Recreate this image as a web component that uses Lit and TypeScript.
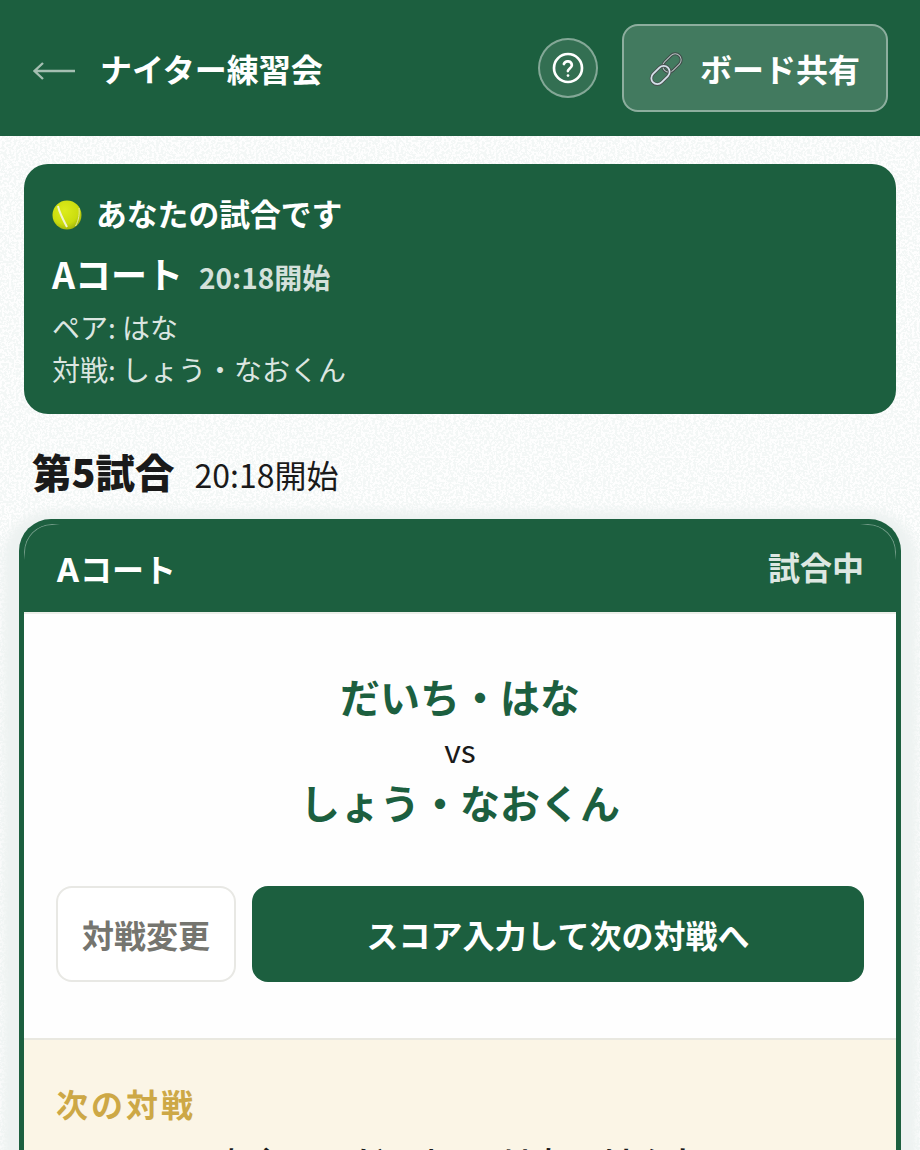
import { LitElement, html, css, unsafeCSS } from "lit";
import { customElement } from "lit/decorators.js";

const paper = `<svg xmlns='http://www.w3.org/2000/svg' width='240' height='240'><filter id='n' x='0' y='0' width='100%' height='100%'><feTurbulence type='fractalNoise' baseFrequency='0.42' numOctaves='2' seed='4' stitchTiles='stitch'/><feColorMatrix values='0 0 0 0 0.9 0 0 0 0 0.93 0 0 0 0 0.92 0 0 0 12 -5.4'/></filter><rect width='240' height='240' fill='#fefefe'/><rect width='240' height='240' filter='url(#n)'/></svg>`;
const noise = unsafeCSS(`url("data:image/svg+xml,${encodeURIComponent(paper)}")`);

@customElement("app-root")
export class AppRoot extends LitElement {
  static styles = css`
    :host {
      display: block;
      width: 920px;
      height: 1150px;
      overflow: hidden;
      font-family: "Noto Sans CJK JP", "Noto Sans", sans-serif;
      color: #1a1a1a;
      background-color: #fbfcfc;
      background-image: ${noise};
      background-size: 240px 240px;
    }
    .top {
      height: 136px;
      box-sizing: border-box;
      background: #1c5f3f;
      display: flex;
      align-items: center;
      padding: 0 32px;
    }
    .back { display: block; width: 44px; height: 20px; margin: 5px 24px 0 0; flex: none; }
    .title { font-size: 32px; font-weight: 700; color: #fff; line-height: 48px; flex: 1; }
    .help {
      width: 60px; height: 60px; box-sizing: border-box; flex: none;
      border-radius: 50%;
      border: 2px solid rgba(255,255,255,.4);
      background: rgba(255,255,255,.1);
      display: flex; align-items: center; justify-content: center;
      margin-right: 24px;
    }
    .share {
      width: 266px; height: 88px; box-sizing: border-box; flex: none;
      border-radius: 16px;
      border: 2px solid rgba(255,255,255,.4);
      background: rgba(255,255,255,.17);
      display: flex; align-items: center; justify-content: center; gap: 16px;
      padding-right: 2px;
      color: #fff; font-size: 32px; font-weight: 700;
    }
    .main { padding: 28px 24px 0; }
    .mine {
      background: #1c5f3f; border-radius: 24px;
      height: 250px; box-sizing: border-box;
      padding: 26px 28px 0;
      color: #fff;
    }
    .mine-h { display: flex; align-items: center; gap: 14px; font-size: 30.8px; font-weight: 700; line-height: 46px; }
    .mine-h svg { margin-top: 3px; flex: none; }
    .mine-c { display: flex; align-items: baseline; gap: 16px; margin: 12px 0 4px; line-height: 50px; font-size: 36px; font-weight: 700; }
    .mine-c span { font-size: 28px; font-weight: 600; color: rgba(255,255,255,.82); }
    .mine-l { font-size: 28px; line-height: 42px; color: rgba(255,255,255,.85); }
    .round { display: flex; align-items: baseline; gap: 20px; padding: 0 8px; margin-top: 27px; height: 66px; line-height: 60px; }
    .round b { font-size: 39.5px; font-weight: 900; }
    .round span { font-size: 32px; font-weight: 400; }
    .card {
      margin: 12px -5px 0;
      position: relative;
      background: #1c5f3f;
      border-radius: 32px 32px 0 0;
      padding: 0 5px;
      box-shadow: 0 8px 10px 16px #edf2f1;
      height: 700px;
    }
    .card::before {
      content: ""; position: absolute; left: 5px; top: 5px; right: 5px; height: 60px;
      border: 1px solid rgba(255,255,255,.38); border-bottom: 0;
      border-radius: 28px 28px 0 0;
      pointer-events: none;
      -webkit-mask-image: radial-gradient(circle at 0 0, #000 28px, transparent 36px), radial-gradient(circle at 100% 0, #000 28px, transparent 36px);
      mask-image: radial-gradient(circle at 0 0, #000 28px, transparent 36px), radial-gradient(circle at 100% 0, #000 28px, transparent 36px);
    }
    .card-h {
      height: 93px; box-sizing: border-box; display: flex; align-items: center; justify-content: space-between;
      padding: 0 32px; font-weight: 700;
    }
    .card-h .c { color: #fff; font-size: 32px; font-family: Inter, "Noto Sans CJK JP", sans-serif; padding-top: 4px; }
    .card-h .s { color: #dde7e2; font-size: 32px; }
    .body { background: #fefefe; border-top: 2px solid #eceee9; height: 426px; box-sizing: border-box; padding-top: 54px; }
    .names { text-align: center; color: #1c5f3f; font-size: 40px; font-weight: 700; line-height: 56px; }
    .vs { text-align: center; font-size: 32px; line-height: 50px; color: #1a1a1a; }
    .btns { display: flex; gap: 16px; padding: 0 32px; margin-top: 56px; }
    .chg {
      width: 180px; height: 96px; box-sizing: border-box; flex: none;
      border: 2px solid #e8e8e4; border-radius: 16px; background: #fff;
      color: #75756f; font-size: 32px; font-weight: 700;
      display: flex; align-items: center; justify-content: center;
    }
    .go {
      flex: 1; height: 96px; background: #1c5f3f; border-radius: 16px; color: #fff;
      font-size: 32px; font-weight: 700;
      display: flex; align-items: center; justify-content: center;
    }
    .next {
      background: #fbf5e6; border-top: 2px solid #e9e8e0; height: 190px; box-sizing: border-box;
      padding: 38px 32px 0;
    }
    .next-l { color: #cda846; font-size: 32px; font-weight: 700; line-height: 50px; letter-spacing: 3px; }
    .next-m { text-align: center; font-size: 33.6px; font-weight: 500; line-height: 48px; margin-top: 10px; }
  `;

  render() {
    return html`
      <div class="top">
        <svg class="back" viewBox="0 0 44 20" fill="none" stroke="#a5bfb2" stroke-width="2.4"><path d="M2 10H43M11 2 2.5 10l8.5 8"/></svg>
        <div class="title">ナイター練習会</div>
        <div class="help">
          <svg width="32" height="32" viewBox="0 0 24 24" fill="none" stroke="#fff" stroke-width="2" stroke-linecap="round"><circle cx="12" cy="12" r="10.5"/><path d="M8.9 9a3.1 3.1 0 0 1 6 1c0 2-3 2.6-3 4.3"/><path d="M12 17.6v.1"/></svg>
        </div>
        <div class="share">
          <svg width="36" height="36" viewBox="0 0 36 36" fill="none">
            <g transform="rotate(-45 24 13)">
              <rect x="13.500" y="7" width="21" height="12" rx="6" stroke="#3f4a48" stroke-width="3"/>
              <rect x="13.500" y="7" width="21" height="12" rx="6" stroke="#b8c4c4" stroke-width="1"/>
            </g>
            <g transform="rotate(-45 12.500 25)">
              <rect x="2" y="19" width="21" height="12" rx="6" stroke="#4a5050" stroke-width="3.400"/>
              <rect x="2" y="19" width="21" height="12" rx="6" stroke="#d5e2ea" stroke-width="1.800"/>
            </g>
          </svg>
          <span>ボード共有</span>
        </div>
      </div>
      <div class="main">
        <div class="mine">
          <div class="mine-h">
            <svg width="30" height="30" viewBox="0 0 30 30">
              <defs><radialGradient id="b" cx=".42" cy=".34" r=".72"><stop offset="0" stop-color="#dcec1c"/><stop offset=".65" stop-color="#cbdc0e"/><stop offset="1" stop-color="#98ad0c"/></radialGradient></defs>
              <circle cx="15" cy="15" r="14.500" fill="url(#b)"/>
              <path d="M6 6c1 5 2.600 8 4 11 1.500 3.500 3 6 5 10" fill="none" stroke="#f2f3cf" stroke-width="2"/>
              <path d="M27 8c.6 5 0 12-3.500 18" fill="none" stroke="#e6ea9a" stroke-width="1"/>
            </svg>
            <span>あなたの試合です</span>
          </div>
          <div class="mine-c">Aコート<span>20:18開始</span></div>
          <div class="mine-l">ペア: はな</div>
          <div class="mine-l">対戦: しょう・なおくん</div>
        </div>
        <div class="round"><b>第5試合</b><span>20:18開始</span></div>
        <div class="card">
          <div class="card-h"><span class="c">Aコート</span><span class="s">試合中</span></div>
          <div class="body">
            <div class="names">だいち・はな</div>
            <div class="vs">vs</div>
            <div class="names">しょう・なおくん</div>
            <div class="btns">
              <div class="chg">対戦変更</div>
              <div class="go">スコア入力して次の対戦へ</div>
            </div>
          </div>
          <div class="next">
            <div class="next-l">次の対戦</div>
            <div class="next-m">あやの・だいち vs はな・けんた</div>
          </div>
        </div>
      </div>
    `;
  }
}
